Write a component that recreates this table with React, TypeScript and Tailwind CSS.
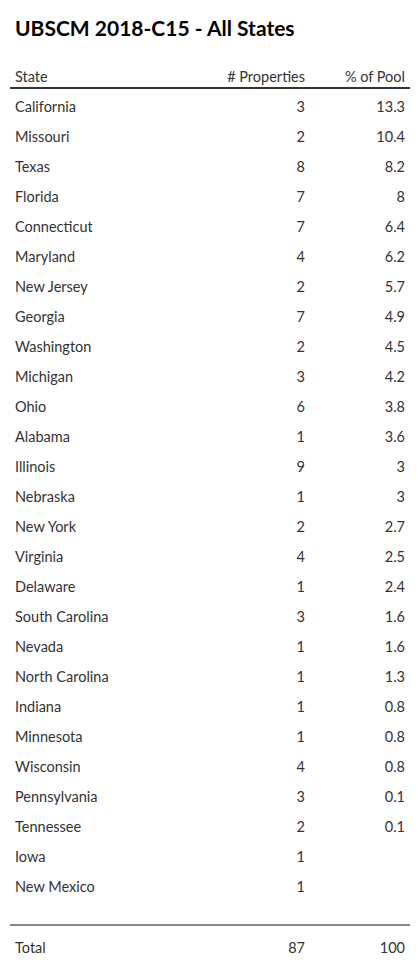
const rows: [string, number, string][] = [
  ["California", 3, "13.3"],
  ["Missouri", 2, "10.4"],
  ["Texas", 8, "8.2"],
  ["Florida", 7, "8"],
  ["Connecticut", 7, "6.4"],
  ["Maryland", 4, "6.2"],
  ["New Jersey", 2, "5.7"],
  ["Georgia", 7, "4.9"],
  ["Washington", 2, "4.5"],
  ["Michigan", 3, "4.2"],
  ["Ohio", 6, "3.8"],
  ["Alabama", 1, "3.6"],
  ["Illinois", 9, "3"],
  ["Nebraska", 1, "3"],
  ["New York", 2, "2.7"],
  ["Virginia", 4, "2.5"],
  ["Delaware", 1, "2.4"],
  ["South Carolina", 3, "1.6"],
  ["Nevada", 1, "1.6"],
  ["North Carolina", 1, "1.3"],
  ["Indiana", 1, "0.8"],
  ["Minnesota", 1, "0.8"],
  ["Wisconsin", 4, "0.8"],
  ["Pennsylvania", 3, "0.1"],
  ["Tennessee", 2, "0.1"],
  ["Iowa", 1, ""],
  ["New Mexico", 1, ""],
];

function Row({ state, count, pct }: { state: string; count: string | number; pct: string }) {
  return (
    <div className="flex h-[30px] items-center px-[5px] leading-5">
      <div className="flex-1">{state}</div>
      <div className="w-[120px] text-right">{count}</div>
      <div className="w-[100px] text-right">{pct}</div>
    </div>
  );
}

export default function App() {
  return (
    <main
      className="w-[420px] bg-white px-[10px] text-[14.5px] text-[#333]"
      style={{ fontFamily: "Lato, 'Open Sans', sans-serif" }}
    >
      <h1 className="pt-[14px] text-[21px] font-bold leading-[28px] px-[5px] text-black">
        UBSCM 2018-C15 - All States
      </h1>
      <div className="mt-[25px] flex border-b-2 border-[#333] px-[5px] leading-5">
        <div className="flex-1">State</div>
        <div className="w-[120px] text-right"># Properties</div>
        <div className="w-[100px] text-right">% of Pool</div>
      </div>
      <div className="pt-[3px]">
        {rows.map(([s, c, p]) => (
          <Row key={s} state={s} count={c} pct={p} />
        ))}
      </div>
      <div className="mt-[22px] border-t-2 border-[#888] pt-[7px]">
        <Row state="Total" count={87} pct="100" />
      </div>
    </main>
  );
}
